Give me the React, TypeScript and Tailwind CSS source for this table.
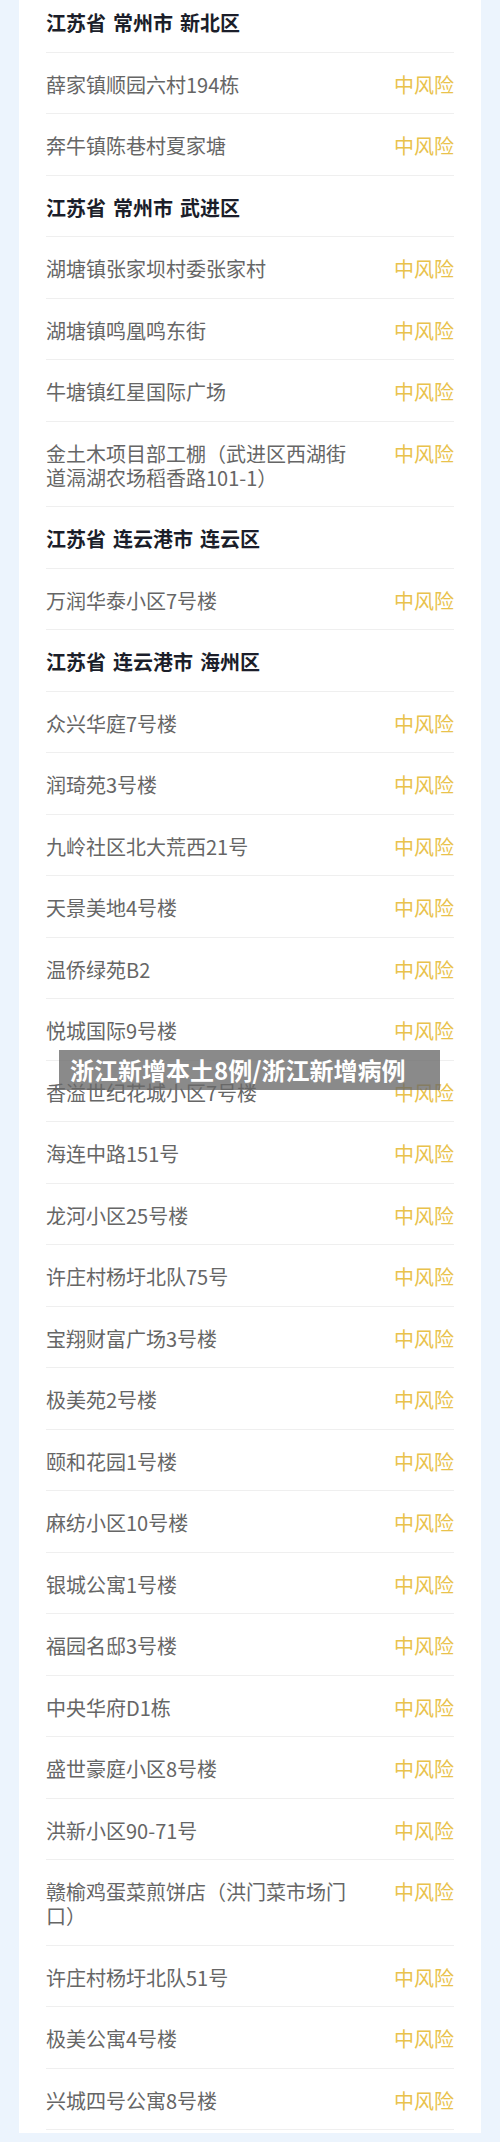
import React from "react";

type Item = { h?: string[]; t?: string };

const items: Item[] = [
  { h: ["江苏省", "常州市", "新北区"] },
  { t: "薛家镇顺园六村194栋" },
  { t: "奔牛镇陈巷村夏家塘" },
  { h: ["江苏省", "常州市", "武进区"] },
  { t: "湖塘镇张家坝村委张家村" },
  { t: "湖塘镇鸣凰鸣东街" },
  { t: "牛塘镇红星国际广场" },
  { t: "金土木项目部工棚（武进区西湖街道滆湖农场稻香路101-1）" },
  { h: ["江苏省", "连云港市", "连云区"] },
  { t: "万润华泰小区7号楼" },
  { h: ["江苏省", "连云港市", "海州区"] },
  { t: "众兴华庭7号楼" },
  { t: "润琦苑3号楼" },
  { t: "九岭社区北大荒西21号" },
  { t: "天景美地4号楼" },
  { t: "温侨绿苑B2" },
  { t: "悦城国际9号楼" },
  { t: "香溢世纪花城小区7号楼" },
  { t: "海连中路151号" },
  { t: "龙河小区25号楼" },
  { t: "许庄村杨圩北队75号" },
  { t: "宝翔财富广场3号楼" },
  { t: "极美苑2号楼" },
  { t: "颐和花园1号楼" },
  { t: "麻纺小区10号楼" },
  { t: "银城公寓1号楼" },
  { t: "福园名邸3号楼" },
  { t: "中央华府D1栋" },
  { t: "盛世豪庭小区8号楼" },
  { t: "洪新小区90-71号" },
  { t: "赣榆鸡蛋菜煎饼店（洪门菜市场门口）" },
  { t: "许庄村杨圩北队51号" },
  { t: "极美公寓4号楼" },
  { t: "兴城四号公寓8号楼" },
];

export default function App() {
  return (
    <div
      className="relative h-[2142px] overflow-hidden bg-[#ecf4fd] px-[19px]"
      style={{ fontFamily: '"Noto Sans CJK SC", "Noto Sans", sans-serif' }}
    >
      <div className="h-full bg-white px-[27px]">
        <div className="mt-[-9px] flex flex-col">
          {items.map((it, i) =>
            it.h ? (
              <div
                key={i}
                className="flex gap-[7px] border-b border-[#efefef] pt-[20px] pb-[16.5px] text-[20px] leading-[24px] font-bold text-[#1b1e2a]"
              >
                {it.h.map((w, j) => (
                  <span key={j}>{w}</span>
                ))}
              </div>
            ) : (
              <div
                key={i}
                className="flex items-start gap-[40px] border-b border-[#efefef] pt-[20px] pb-[16.5px] text-[20px] leading-[24px]"
              >
                <div className="flex-1 text-[#666666]">{it.t}</div>
                <div className="w-[60px] shrink-0 text-right text-[#e9c24c]">中风险</div>
              </div>
            )
          )}
        </div>
      </div>
      <div className="absolute left-[59px] top-[1050px] flex h-[40px] w-[381px] items-center bg-[rgba(105,105,105,0.78)] pl-[11px] text-[24px] leading-[28px] font-bold text-white">
        浙江新增本土8例/浙江新增病例
      </div>
    </div>
  );
}
